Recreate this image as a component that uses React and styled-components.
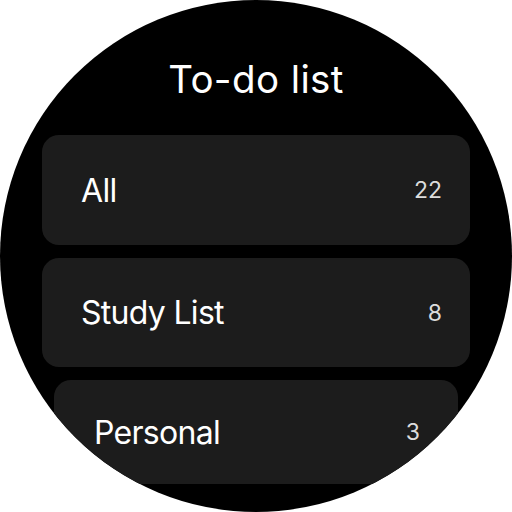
import React from 'react'
import styled, { createGlobalStyle } from 'styled-components'

const GlobalStyle = createGlobalStyle`
  html, body {
    margin: 0;
    padding: 0;
    background: #ffffff;
  }
  body {
    font-family: Inter, "Noto Sans", Roboto, sans-serif;
  }
`

const Watch = styled.div`
  width: 512px;
  height: 512px;
  border-radius: 50%;
  overflow: hidden;
  background: #000000;
  display: flex;
  flex-direction: column;
  align-items: center;
`

const Title = styled.h1`
  margin: 58px 0 0;
  height: 43px;
  line-height: 43px;
  font-size: 38.5px;
  font-weight: 400;
  color: #ffffff;
  letter-spacing: 0.4px;
`

const List = styled.div`
  margin-top: 34px;
  width: 100%;
  display: flex;
  flex-direction: column;
  align-items: center;
  gap: 13px;
`

const Chip = styled.div`
  box-sizing: border-box;
  width: ${p => p.width}px;
  height: ${p => p.height}px;
  flex-shrink: 0;
  border-radius: 17px;
  background: #1c1c1c;
  display: flex;
  align-items: center;
  justify-content: space-between;
  padding: 0 ${p => p.right}px 0 ${p => p.left}px;
`

const Label = styled.span`
  font-size: 32px;
  color: #ffffff;
  letter-spacing: -0.7px;
`

const Count = styled.span`
  font-size: 23px;
  color: #dcdcdc;
`

const lists = [
  { name: 'All', count: 22, width: 428, height: 110, left: 39, right: 28 },
  { name: 'Study List', count: 8, width: 428, height: 109, left: 39, right: 28 },
  { name: 'Personal', count: 3, width: 404, height: 104, left: 40, right: 38 },
]

export default function App() {
  return (
    <>
      <GlobalStyle />
      <Watch>
        <Title>To-do list</Title>
        <List>
          {lists.map(l => (
            <Chip key={l.name} width={l.width} height={l.height} left={l.left} right={l.right}>
              <Label>{l.name}</Label>
              <Count>{l.count}</Count>
            </Chip>
          ))}
        </List>
      </Watch>
    </>
  )
}
